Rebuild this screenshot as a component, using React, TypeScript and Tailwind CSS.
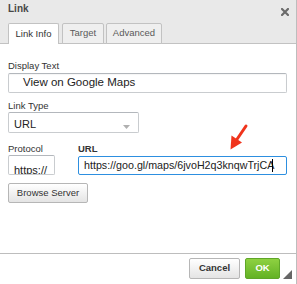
import React from "react";

const font = { fontFamily: '"Liberation Sans", Arial, sans-serif' };

export default function App() {
  return (
    <div
      className="relative flex h-[284px] w-[297px] flex-col border-r border-[#bdbdbd] bg-white text-[#333]"
      style={font}
    >
      {/* Header */}
      <div className="flex h-[44px] flex-col border-b border-[#c2c2c2] bg-[#e9e9e9]">
        <div className="flex h-[23px] justify-between pl-2 pr-[7px]">
          <span className="mt-[3px] text-[10px] font-bold leading-[12px] text-[#474747]">Link</span>
          <svg className="mt-[8px]" width="8" height="8" viewBox="0 0 8 8">
            <path d="M1 1 L7 7 M7 1 L1 7" stroke="#6b6b6b" strokeWidth="2.2" strokeLinecap="square" />
          </svg>
        </div>
        <div className="-mb-px flex h-[21px] items-end pl-2">
          <div className="flex h-[21px] w-[51px] items-center justify-center rounded-t-[2px] border border-b-0 border-[#c2c2c2] bg-white text-[9.5px] text-[#333]">
            Link Info
          </div>
          <div className="ml-[3px] flex h-[21px] w-[42px] items-center justify-center rounded-t-[2px] border border-[#c2c2c2] bg-[#efefef] text-[9.5px] text-[#5a5a5a]">
            Target
          </div>
          <div className="ml-[2px] flex h-[21px] w-[56px] items-center justify-center rounded-t-[2px] border border-[#c2c2c2] bg-[#efefef] text-[9.5px] text-[#5a5a5a]">
            Advanced
          </div>
        </div>
      </div>

      {/* Body */}
      <div className="flex flex-1 flex-col px-2 pt-[16px]">
        <label className="text-[9.5px] leading-[12px]">Display Text</label>
        <div className="mt-[1px] flex h-[20px] w-[279px] items-center rounded-[2px] border border-[#c9cccf] border-t-[#b3b7bc] pl-[14px] text-[11.5px] text-[#222] shadow-[inset_0_1px_1px_rgba(0,0,0,0.04)]">
          View on Google Maps
        </div>

        <label className="mt-[7px] text-[9.5px] leading-[12px]">Link Type</label>
        <div className="relative flex h-[21px] w-[131px] items-end overflow-hidden rounded-[2px] border border-[#c9cccf] border-t-[#b3b7bc] pb-[1px] pl-[5px] text-[11px] leading-[14px] text-[#222]">
          URL
          <svg className="absolute bottom-[3px] right-[8px]" width="7" height="4" viewBox="0 0 7 4">
            <path d="M0 0 H7 L3.5 4 Z" fill="#b0b0b0" />
          </svg>
        </div>

        <div className="mt-[10px] flex">
          <div className="flex w-[70px] flex-col">
            <label className="text-[9.5px] leading-[12px]">Protocol</label>
            <div className="flex h-[20px] w-[47px] items-end overflow-hidden rounded-[2px] border border-[#c9cccf] border-t-[#b3b7bc] pl-[5px] text-[11px] leading-[13px] text-[#222]">
              <span className="-mb-[3px]">https://</span>
            </div>
          </div>
          <div className="flex flex-col">
            <label className="text-[9.5px] font-bold leading-[12px]">URL</label>
            <div className="mt-[1px] flex h-[19px] w-[209px] items-center overflow-hidden whitespace-nowrap rounded-[2px] border border-[#2d8fe0] pl-[5px] text-[10.7px] text-[#222]">
              <span>https://goo.gl/maps/6jvoH2q3knqwTrjCA</span>
              <span className="-ml-[2px] inline-block h-[13px] w-px shrink-0 bg-black" />
            </div>
          </div>
        </div>

        <button className="mt-[8px] flex h-[20px] w-[80px] items-center justify-center rounded-[2px] border border-[#b6b6b6] bg-gradient-to-b from-white to-[#e4e4e4] text-[9.5px] text-[#333]">
          Browse Server
        </button>
      </div>

      {/* Footer */}
      <div className="flex h-[31px] items-start justify-end gap-[5px] border-t border-[#bdbdbd] pr-[16px] pt-[4px]">
        <button className="flex h-[21px] w-[51px] items-center justify-center rounded-[2px] border border-[#b6b6b6] bg-gradient-to-b from-white to-[#e4e4e4] text-[9.5px] font-bold text-[#333]">
          Cancel
        </button>
        <button className="flex h-[21px] w-[35px] items-center justify-center rounded-[2px] border border-[#5fa628] bg-gradient-to-b from-[#8ed141] to-[#63b224] text-[9.5px] font-bold text-white">
          OK
        </button>
      </div>

      {/* Resize grip */}
      <svg className="absolute bottom-[5px] right-[4px]" width="9" height="9" viewBox="0 0 9 9">
        <path d="M9 0 V9 H0 Z" fill="#666" />
      </svg>

      {/* Annotation arrow */}
      <svg className="pointer-events-none absolute left-0 top-0" width="297" height="284" viewBox="0 0 297 284">
        <line x1="246" y1="126" x2="236.5" y2="140" stroke="#f0341c" strokeWidth="3" strokeLinecap="round" />
        <path d="M230.5 149.5 L231.5 135.5 L242 142.5 Z" fill="#f0341c" />
      </svg>
    </div>
  );
}
